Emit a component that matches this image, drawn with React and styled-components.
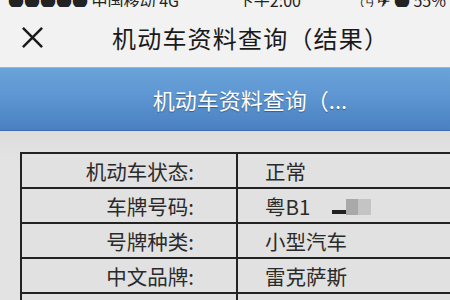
import React from 'react';
import styled, { createGlobalStyle } from 'styled-components';

const Global = createGlobalStyle`
  html, body {
    margin: 0;
    padding: 0;
    background: #e2e2e2;
  }
  body {
    font-family: "Noto Sans CJK SC", "Noto Sans", sans-serif;
    width: 450px;
    height: 300px;
    overflow: hidden;
  }
`;

const Page = styled.div`
  display: flex;
  flex-direction: column;
  width: 450px;
  height: 300px;
  overflow: hidden;
  & > * {
    flex-shrink: 0;
  }
`;

const StatusBar = styled.div`
  height: 7px;
  overflow: hidden;
  display: flex;
  align-items: flex-end;
  justify-content: space-between;
  background: #f2f2f2;
  padding: 0 4px 0 8px;
  color: #222;
  font-size: 16px;
  line-height: 16px;
`;

const StatusText = styled.span`
  display: block;
  margin-bottom: -1px;
  white-space: nowrap;
`;

const NavBar = styled.div`
  height: 60px;
  display: flex;
  align-items: center;
  background: #f2f2f2;
  padding-left: 21px;
`;

const Close = styled.svg`
  width: 23px;
  height: 23px;
  flex: none;
`;

const NavTitle = styled.div`
  margin-left: 68px;
  font-size: 24px;
  letter-spacing: 1.2px;
  color: #1a1a1a;
  white-space: nowrap;
`;

const Banner = styled.div`
  height: 62px;
  display: flex;
  align-items: center;
  justify-content: center;
  padding-left: 50px;
  background: linear-gradient(180deg, #6ba4da 0%, #5b94d0 50%, #4a80c2 100%);
  border-top: 1px solid #8fb9e4;
  border-bottom: 1px solid #3d6eab;
  color: #fff;
  font-size: 22px;
  text-shadow: 0 1px 1px rgba(0, 0, 0, 0.35);
  white-space: nowrap;
`;

const Content = styled.div`
  flex: 1 1 auto;
  min-height: 0;
  overflow: hidden;
  background: linear-gradient(180deg, #dcdcdc 0%, #e3e3e3 30px, #e3e3e3 100%);
  padding: 21px 0 0 20px;
`;

const Table = styled.div`
  display: grid;
  grid-template-columns: 216px 240px;
  border-top: 2px solid #222;
  border-left: 2px solid #222;
  background: #e1e1e1;
`;

const Cell = styled.div`
  height: 33px;
  border-right: 2px solid #222;
  border-bottom: 2px solid #222;
  display: flex;
  align-items: center;
  font-size: 20.5px;
  color: ${p => (p.$faded ? '#b0b0b0' : '#2a2a2a')};
  filter: ${p => (p.$faded ? 'blur(0.8px)' : 'none')};
  justify-content: ${p => (p.$label ? 'flex-end' : 'flex-start')};
  padding: ${p => (p.$label ? '0 42px 0 0' : '0 0 0 27px')};
  white-space: nowrap;
`;

const Mask = styled.span`
  display: inline-flex;
  align-items: flex-end;
  margin-left: 22px;
  height: 18px;
`;

const MaskBar = styled.span`
  display: block;
  width: 14px;
  height: 4px;
  background: #222;
  margin-bottom: 1px;
`;

const MaskBlock = styled.span`
  display: block;
  width: ${p => p.$w}px;
  height: 16px;
  background: ${p => p.$c};
`;

const rows = [
  ['机动车状态:', '正常'],
  ['车牌号码:', 'plate'],
  ['号牌种类:', '小型汽车'],
  ['中文品牌:', '雷克萨斯'],
  ['品牌型号:', '雷克萨斯牌', true],
];

export default function App() {
  return (
    <Page>
      <Global />
      <StatusBar>
        <StatusText>●●●●● 中国移动 4G</StatusText>
        <StatusText>下午2:00</StatusText>
        <StatusText>◷ ✈ ● 55%</StatusText>
      </StatusBar>
      <NavBar>
        <Close viewBox="0 0 24 24">
          <path d="M2 2 L22 22 M22 2 L2 22" stroke="#1a1a1a" strokeWidth="2.6" fill="none" />
        </Close>
        <NavTitle>机动车资料查询（结果）</NavTitle>
      </NavBar>
      <Banner>机动车资料查询（...</Banner>
      <Content>
        <Table>
          {rows.map(([label, value, faded]) => (
            <React.Fragment key={label}>
              <Cell $label>{label}</Cell>
              <Cell $faded={faded}>
                {value === 'plate' ? (
                  <>
                    粤B1
                    <Mask>
                      <MaskBar />
                      <MaskBlock $w={12} $c="#a9a9a9" />
                      <MaskBlock $w={13} $c="#c4c4c4" />
                    </Mask>
                  </>
                ) : (
                  value
                )}
              </Cell>
            </React.Fragment>
          ))}
        </Table>
      </Content>
    </Page>
  );
}
